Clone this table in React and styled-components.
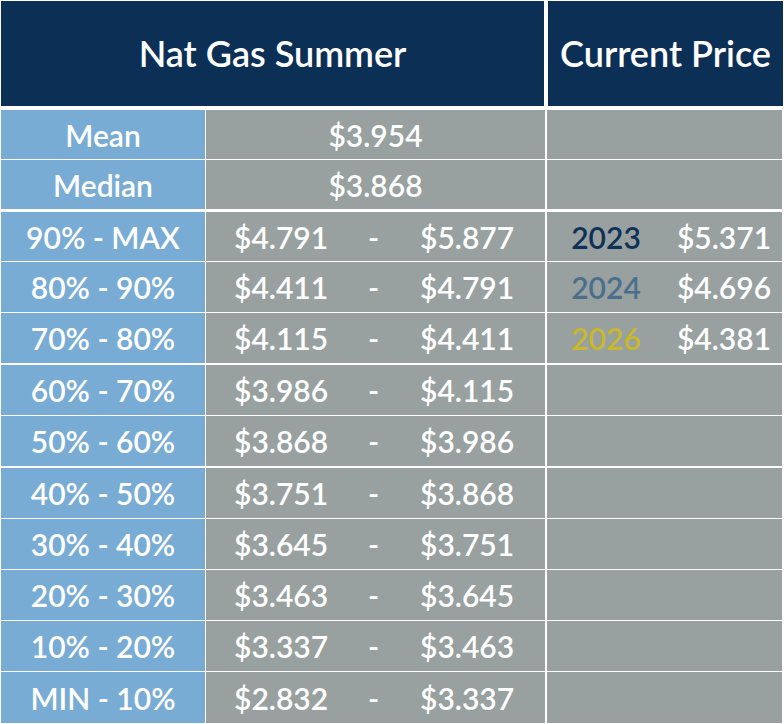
import styled, { createGlobalStyle } from "styled-components";

const GlobalStyle = createGlobalStyle`
  html, body {
    margin: 0;
    background: #ffffff;
  }
  body {
    font-family: Lato, "Liberation Sans", sans-serif;
  }
`;

const stats = [
  { label: "Mean", value: "$3.954", height: 49 },
  { label: "Median", value: "$3.868", height: 49, gapAfter: 3 },
];

const ranges = [
  { label: "90% - MAX", low: "$4.791", high: "$5.877", height: 49, year: "2023", price: "$5.371", tone: "#0f3158" },
  { label: "80% - 90%", low: "$4.411", high: "$4.791", year: "2024", price: "$4.696", tone: "#4a6f8b" },
  { label: "70% - 80%", low: "$4.115", high: "$4.411", gapAfter: 2, year: "2026", price: "$4.381", tone: "#c9b82b" },
  { label: "60% - 70%", low: "$3.986", high: "$4.115" },
  { label: "50% - 60%", low: "$3.868", high: "$3.986", gapAfter: 2 },
  { label: "40% - 50%", low: "$3.751", high: "$3.868" },
  { label: "30% - 40%", low: "$3.645", high: "$3.751" },
  { label: "20% - 30%", low: "$3.463", high: "$3.645" },
  { label: "10% - 20%", low: "$3.337", high: "$3.463" },
  { label: "MIN - 10%", low: "$2.832", high: "$3.337", last: true },
];

export default function App() {
  return (
    <>
      <GlobalStyle />
      <Page>
        <HeaderRow>
          <HeaderCell>Nat Gas Summer</HeaderCell>
          <HeaderCell>Current Price</HeaderCell>
        </HeaderRow>
        <Body>
          {stats.map((s) => (
            <Row key={s.label} $height={s.height} $gapAfter={s.gapAfter}>
              <LabelCell>{s.label}</LabelCell>
              <DataCell $single>{s.value}</DataCell>
              <PriceCell />
            </Row>
          ))}
          {ranges.map((r) => (
            <Row key={r.label} $height={r.height} $gapAfter={r.gapAfter} $grow={r.last}>
              <LabelCell>{r.label}</LabelCell>
              <DataCell>
                <span>{r.low}</span>
                <span>-</span>
                <span>{r.high}</span>
              </DataCell>
              <PriceCell>
                {r.year && (
                  <>
                    <Year $tone={r.tone}>{r.year}</Year>
                    <span>{r.price}</span>
                  </>
                )}
              </PriceCell>
            </Row>
          ))}
        </Body>
      </Page>
    </>
  );
}

const Page = styled.div`
  width: 784px;
  height: 724px;
  box-sizing: border-box;
  padding: 1px 1px 0 1px;
  display: flex;
  flex-direction: column;
  background: #ffffff;
  overflow: hidden;
`;

const HeaderRow = styled.div`
  display: grid;
  grid-template-columns: 543px 235px;
  column-gap: 4px;
  height: 105px;
  margin-bottom: 4px;
`;

const HeaderCell = styled.div`
  background: #0b2f55;
  color: #ffffff;
  display: flex;
  align-items: center;
  justify-content: center;
  font-size: 36px;
  font-weight: 600;
  padding-bottom: 2px;
`;

const Body = styled.div`
  flex: 1;
  display: flex;
  flex-direction: column;
`;

const Row = styled.div`
  display: grid;
  grid-template-columns: 204px 339px 236px;
  column-gap: 1px;
  height: ${(p) => (p.$grow ? "auto" : `${p.$height || 50}px`)};
  flex: ${(p) => (p.$grow ? 1 : "none")};
  margin-bottom: ${(p) => p.$gapAfter || 1}px;
  color: #ffffff;
  font-size: 30px;
  font-weight: 600;
`;

const LabelCell = styled.div`
  background: #79acd4;
  display: flex;
  align-items: center;
  justify-content: center;
`;

const DataCell = styled.div`
  background: #98a1a0;
  display: grid;
  grid-template-columns: ${(p) => (p.$single ? "1fr" : "93px 93px 93px")};
  justify-content: center;
  align-items: center;
  text-align: center;
  padding-right: ${(p) => (p.$single ? 0 : 4)}px;
`;

const PriceCell = styled.div`
  background: #98a1a0;
  margin-left: 1px;
  display: grid;
  grid-template-columns: 118px 118px;
  align-items: center;
  text-align: center;
`;

const Year = styled.span`
  color: ${(p) => p.$tone};
`;
